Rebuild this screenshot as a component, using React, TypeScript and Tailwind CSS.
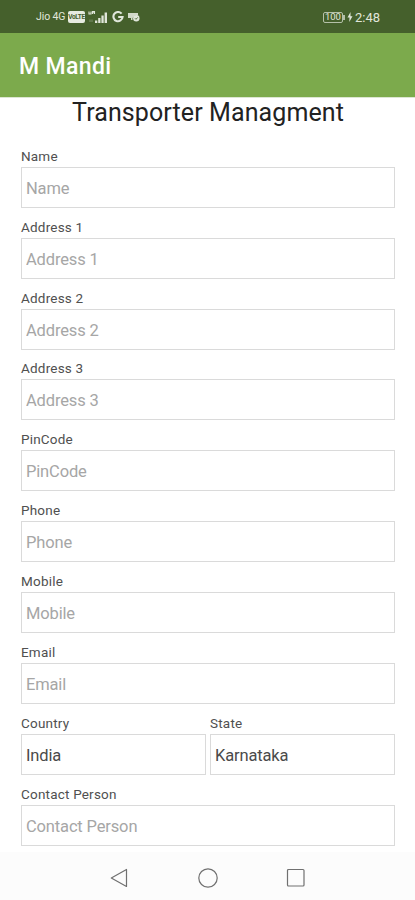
import React, { useState } from 'react';

interface FieldProps {
  label: string;
  value: string;
  onChange: (value: string) => void;
}

const fields = ['Name', 'Address 1', 'Address 2', 'Address 3', 'PinCode', 'Phone', 'Mobile', 'Email'];

const Field: React.FC<FieldProps> = ({ label, value, onChange }) => (
  <label className="block h-[70.8px] min-w-0 flex-1">
    <span className="block h-[19px] text-[13.5px] leading-[17px] tracking-[0.2px] text-[#505050]">{label}</span>
    <input
      value={value}
      placeholder={label}
      onChange={(e) => onChange(e.target.value)}
      className="block h-[41px] w-full border border-[#dadada] bg-white px-1 pt-0.5 text-[16.5px] tracking-[-0.15px] text-[#4a4a4a] outline-none placeholder:text-[#a6a6a6]"
    />
  </label>
);

const StatusBar: React.FC = () => (
  <div className="flex h-[33px] items-center justify-between bg-[#45602c] pl-9 pr-[35px] pt-px text-[#e0e6da]">
    <div className="flex items-center">
      <span className="w-[30px] whitespace-nowrap text-[10.5px] leading-none tracking-[-0.1px]">Jio 4G</span>
      <span className="ml-0.5 flex h-3 w-[17px] items-center justify-center rounded-[2px] bg-[#e6ebe0] text-[6.5px] font-bold leading-none tracking-[-0.3px] text-[#45602c]">VoLTE</span>
      <svg className="ml-[3px] h-[14px] w-5" viewBox="0 0 20 14" fill="currentColor">
        <path d="M1 1.500v2.500h2V1.500M4.500 4V1.500h2V4M4.500 2.800h2" fill="none" stroke="currentColor" strokeWidth="1.1" />
        <path d="M2 9.500v2.500M4 9.500v2.500" fill="none" stroke="currentColor" strokeWidth="0.6" opacity="0.6" />
        <path d="M7 10.500h2.300V13H7zM10.200 8h2.300v5h-2.300zM13.400 5.500h2.300V13h-2.300zM16.600 2.500h2.400V13h-2.400z" />
      </svg>
      <svg className="ml-1 h-3 w-3" viewBox="0 0 12 12" fill="none" stroke="currentColor" strokeWidth="2.100">
        <path d="M9.600 2.700A4.600 4.600 0 1 0 10.600 6H6.200" />
      </svg>
      <svg className="ml-[3px] h-3 w-[13px]" viewBox="0 0 13 12" fill="currentColor">
        <path d="M1 2h10v2.500H8L5.500 7v2H4V7H1z" opacity="0.9" />
        <circle cx="9.300" cy="7.300" r="3.200" />
        <path d="M8 7.300l1 1 1.700-1.900" fill="none" stroke="#45602c" strokeWidth="0.9" />
      </svg>
    </div>
    <div className="flex items-center">
      <span className="flex h-[11px] w-5 items-center justify-center rounded-[2px] border border-[#b4c0a8] text-[9.5px] leading-none">100</span>
      <span className="h-[5px] w-0.5 bg-[#b4c0a8]" />
      <svg className="ml-0.5 h-[10px] w-1.5" viewBox="0 0 6 10" fill="currentColor">
        <path d="M3.500 0L0.500 5.500h2L2.300 10 5.500 4.300h-2z" />
      </svg>
      <span className="ml-0.5 text-[13px] leading-none">2:48</span>
    </div>
  </div>
);

const NavigationBar: React.FC = () => (
  <div className="flex h-12 items-center justify-center gap-[68px] bg-[#fcfcfc] pt-[3px] text-[#707070]">
    <svg className="h-5 w-5" viewBox="0 0 20 20" fill="none" stroke="currentColor" strokeWidth="1.2" strokeLinejoin="round">
      <path d="M16.500 1.500v17L1.300 10z" />
    </svg>
    <svg className="h-5 w-5" viewBox="0 0 20 20" fill="none" stroke="currentColor" strokeWidth="1.200">
      <circle cx="10" cy="10" r="9.200" />
    </svg>
    <svg className="h-5 w-5" viewBox="0 0 20 20" fill="none" stroke="currentColor" strokeWidth="1.200">
      <rect x="1.500" y="1.500" width="16.500" height="16.500" rx="1" />
    </svg>
  </div>
);

const App: React.FC = () => {
  const [form, setForm] = useState<Record<string, string>>({ Country: 'India', State: 'Karnataka' });

  const renderField = (label: string) => (
    <Field
      key={label}
      label={label}
      value={form[label] || ''}
      onChange={(value) => setForm({ ...form, [label]: value })}
    />
  );

  return (
    <div className="flex h-[900px] w-full flex-col overflow-hidden bg-white font-['Roboto',sans-serif]">
      <StatusBar />
      <header className="flex h-16 shrink-0 items-center bg-[#7caa4c] pl-[19px] pt-1">
        <h1 className="text-[23px] font-medium tracking-[0.35px] text-white">M Mandi</h1>
      </header>
      <main className="min-h-0 flex-1 overflow-hidden border-t border-[#dce6d2] pl-[21px] pr-5">
        <h2 className="h-[50px] text-center text-[25px] leading-[29px] tracking-[0.1px] text-[#222222]">Transporter Managment</h2>
        {fields.map(renderField)}
        <div className="flex gap-1 pt-px">
          {renderField('Country')}
          {renderField('State')}
        </div>
        {renderField('Contact Person')}
      </main>
      <NavigationBar />
    </div>
  );
};

export default App;
